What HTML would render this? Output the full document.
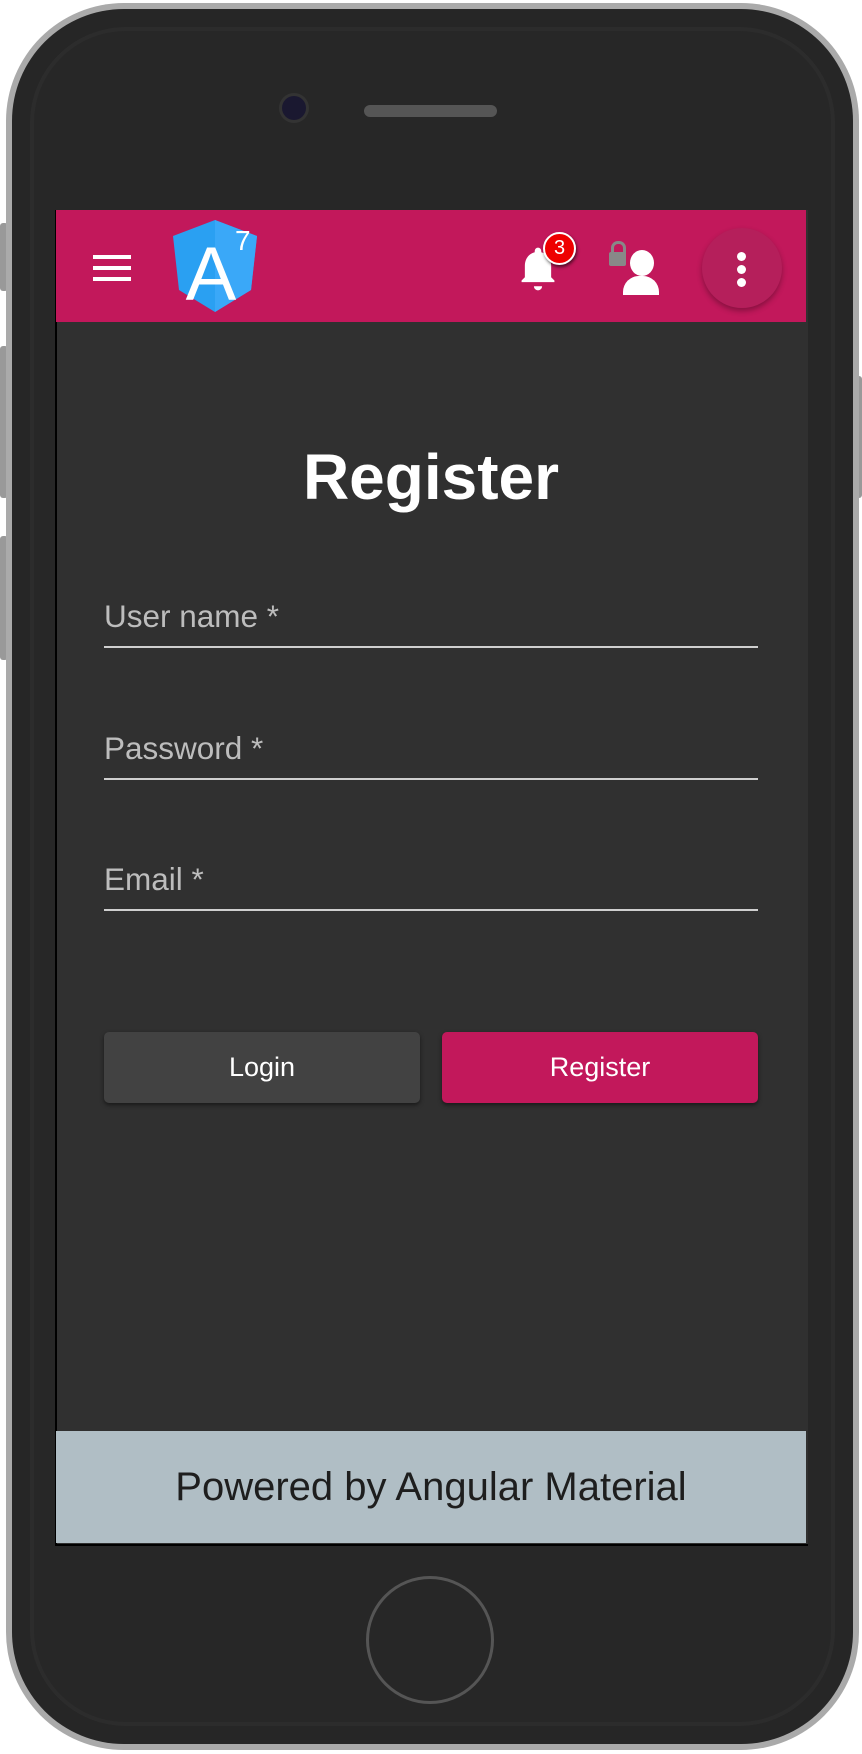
<!DOCTYPE html>
<html><head><style>
body{margin:0;width:862px;height:1754px;background:#fff;position:relative;overflow:hidden;font-family:"Liberation Sans",Arial,sans-serif}
.a{position:absolute}
.lbl{position:absolute;left:104px;color:#bdbdbd;font-size:31.5px}
.line{position:absolute;left:104px;width:654px;height:2px;background:#cfcfcf}
.btn{position:absolute;top:1032px;height:71px;border-radius:5px;color:#fff;font-size:27px;line-height:71px;text-align:center;box-shadow:0 2px 4px rgba(0,0,0,.5)}
</style></head><body>
<div class="a" style="left:0;top:223px;width:8px;height:68px;background:#999;border-radius:3px"></div>
<div class="a" style="left:0;top:346px;width:8px;height:152px;background:#999;border-radius:3px"></div>
<div class="a" style="left:0;top:536px;width:8px;height:124px;background:#999;border-radius:3px"></div>
<div class="a" style="left:852px;top:376px;width:10px;height:122px;background:#999;border-radius:3px"></div>
<div class="a" style="left:6px;top:3px;width:853px;height:1747px;border-radius:118px;background:#aaa"></div>
<div class="a" style="left:12px;top:9px;width:841px;height:1735px;border-radius:112px;background:#262626"></div>
<div class="a" style="left:30px;top:27px;width:805px;height:1699px;border-radius:96px;background:#272727;box-shadow:inset 0 0 0 4px #2c2c2c"></div>
<div class="a" style="left:282px;top:96px;width:24px;height:24px;border-radius:50%;background:#1a1830;box-shadow:0 0 0 3px #333"></div>
<div class="a" style="left:364px;top:105px;width:133px;height:12px;border-radius:6px;background:#555"></div>
<div class="a" style="left:366px;top:1576px;width:128px;height:128px;border-radius:50%;border:3px solid #555;box-sizing:border-box"></div>
<div class="a" style="left:55px;top:210px;width:751px;height:1334px;background:#303030;border-left:2px solid #000;border-bottom:2px solid #000"></div>
<div class="a" style="left:56px;top:210px;width:750px;height:112px;background:#c2185b"></div>
<div class="a" style="left:93px;top:255px;width:38px;height:4px;background:#fff;box-shadow:0 11px 0 #fff,0 22px 0 #fff"></div>
<svg class="a" style="left:173px;top:220px" width="84" height="92" viewBox="0 0 84 92">
<polygon points="0,16 42,0 84,16 78,70 42,92 6,70" fill="#2aa0f2"/>
<polygon points="42,0 84,16 78,70 42,92" fill="#3aa8f8"/>
<text x="38" y="80" font-family="Liberation Sans" font-size="76" fill="#fff" text-anchor="middle" transform="scale(1,1)">A</text>
<text x="62" y="30" font-family="Liberation Sans" font-size="28" fill="#fff">7</text>
</svg>
<svg class="a" style="left:518px;top:246px" width="40" height="46" viewBox="0 0 24 28"><path d="M12 27a2.5 2.5 0 0 0 2.5-2.5h-5A2.5 2.5 0 0 0 12 27zM20 19v-7c0-4-2.3-7.3-6-8.2V3a2 2 0 0 0-4 0v.8C6.3 4.7 4 8 4 12v7l-2 2v1h20v-1z" fill="#fff"/></svg>
<div class="a" style="left:543px;top:232px;width:29px;height:29px;border-radius:50%;background:#e00;border:2px solid #fff;color:#fff;font-size:20px;line-height:29px;text-align:center;box-shadow:1px 2px 3px rgba(0,0,0,.6)">3</div>
<div class="a" style="left:609px;top:252px;width:17px;height:14px;background:#888;border-radius:2px"></div>
<div class="a" style="left:611px;top:241px;width:9px;height:13px;border:3px solid #888;border-bottom:none;border-radius:7px 7px 0 0"></div>
<div class="a" style="left:630px;top:250px;width:24px;height:26px;border-radius:50%;background:#fff"></div>
<div class="a" style="left:623px;top:276px;width:36px;height:19px;border-radius:16px 16px 0 0;background:#fff"></div>
<div class="a" style="left:702px;top:228px;width:80px;height:80px;border-radius:50%;background:#b51f5b;box-shadow:0 3px 6px rgba(0,0,0,.3)"></div>
<div class="a" style="left:737px;top:252px;width:9px;height:9px;border-radius:50%;background:#fff;box-shadow:0 13px 0 #fff,0 26px 0 #fff"></div>
<div class="a" style="left:56px;top:440px;width:750px;text-align:center;color:#fff;font-weight:bold;font-size:64px">Register</div>
<div class="lbl" style="top:598px">User name *</div><div class="line" style="top:646px"></div>
<div class="lbl" style="top:730px">Password *</div><div class="line" style="top:778px"></div>
<div class="lbl" style="top:861px">Email *</div><div class="line" style="top:909px"></div>
<div class="btn" style="left:104px;width:316px;background:#424242">Login</div>
<div class="btn" style="left:442px;width:316px;background:#c2185b">Register</div>
<div class="a" style="left:56px;top:1431px;width:750px;height:112px;background:#b0bec5;color:#1e1e1e;font-size:40px;line-height:112px;text-align:center">Powered by Angular Material</div>
</body></html>
